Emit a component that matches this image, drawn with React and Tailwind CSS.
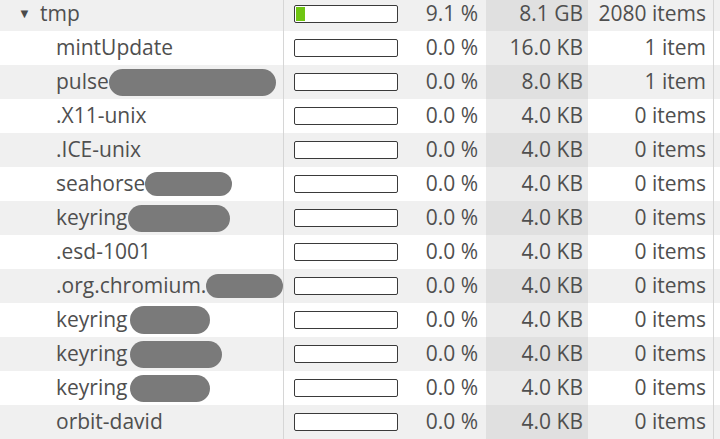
import React from 'react';

const rows = [
  { name: 'tmp', pct: '9.1 %', fill: 9, size: '8.1 GB', items: '2080 items', root: true },
  { name: 'mintUpdate', pct: '0.0 %', size: '16.0 KB', items: '1 item' },
  { name: 'pulse', blob: { w: 167, h: 27, ml: 0 }, pct: '0.0 %', size: '8.0 KB', items: '1 item' },
  { name: '.X11-unix', pct: '0.0 %', size: '4.0 KB', items: '0 items' },
  { name: '.ICE-unix', pct: '0.0 %', size: '4.0 KB', items: '0 items' },
  { name: 'seahorse', blob: { w: 87, h: 24, ml: 0 }, pct: '0.0 %', size: '4.0 KB', items: '0 items' },
  { name: 'keyring', blob: { w: 102, h: 27, ml: 0 }, pct: '0.0 %', size: '4.0 KB', items: '0 items' },
  { name: '.esd-1001', pct: '0.0 %', size: '4.0 KB', items: '0 items' },
  { name: '.org.chromium.', blob: { w: 77, h: 24, ml: 0 }, pct: '0.0 %', size: '4.0 KB', items: '0 items' },
  { name: 'keyring', blob: { w: 80, h: 28, ml: 2 }, pct: '0.0 %', size: '4.0 KB', items: '0 items' },
  { name: 'keyring', blob: { w: 92, h: 27, ml: 2 }, pct: '0.0 %', size: '4.0 KB', items: '0 items' },
  { name: 'keyring', blob: { w: 80, h: 27, ml: 2 }, pct: '0.0 %', size: '4.0 KB', items: '0 items' },
  { name: 'orbit-david', pct: '0.0 %', size: '4.0 KB', items: '0 items' },
];

const Row = ({ row, odd }) => (
  <div className={`flex h-[34px] ${odd ? 'bg-white' : 'bg-[#f0f0f0]'}`}>
    <div className="flex w-[284px] items-center overflow-hidden border-r border-[#d6d6d6]">
      {row.root ? (
        <>
          <span className="ml-[18px] w-[22px] text-[13px] text-[#4a4a4a]">▼</span>
          <span>{row.name}</span>
        </>
      ) : (
        <span className="ml-[56px] flex shrink-0 items-center">
          {row.name}
          {row.blob && (
            <span
              className="inline-block rounded-full bg-[#7a7a7a] blur-[0.5px]"
              style={{ width: row.blob.w, height: row.blob.h, marginLeft: row.blob.ml }}
            />
          )}
        </span>
      )}
    </div>
    <div className="flex w-[202px] items-center">
      <div className="ml-[10px] h-[18px] w-[104px] rounded-[2px] border-[1.5px] border-[#3a3a3a] bg-white p-px">
        {row.fill ? <div className="h-full w-[9px] bg-[#6fc512]" /> : null}
      </div>
      <span className="ml-auto mr-[8px]">{row.pct}</span>
    </div>
    <div className={`flex w-[102px] items-center justify-end pr-[5px] ${odd ? 'bg-[#ebebeb]' : 'bg-[#e0e0e0]'}`}>
      {row.size}
    </div>
    <div className="flex w-[126px] items-center justify-end border-r border-[#d6d6d6] pr-[7px]">
      {row.items}
    </div>
  </div>
);

export default function App() {
  return (
    <div
      className="h-[439px] w-[720px] overflow-hidden bg-white text-[21px] text-[#4f4f4f]"
      style={{ fontFamily: '"Open Sans", "Noto Sans", sans-serif' }}
    >
      <div className="-mt-[3px]">
        {rows.map((r, i) => (
          <Row key={i} row={r} odd={i % 2 === 1} />
        ))}
      </div>
    </div>
  );
}
